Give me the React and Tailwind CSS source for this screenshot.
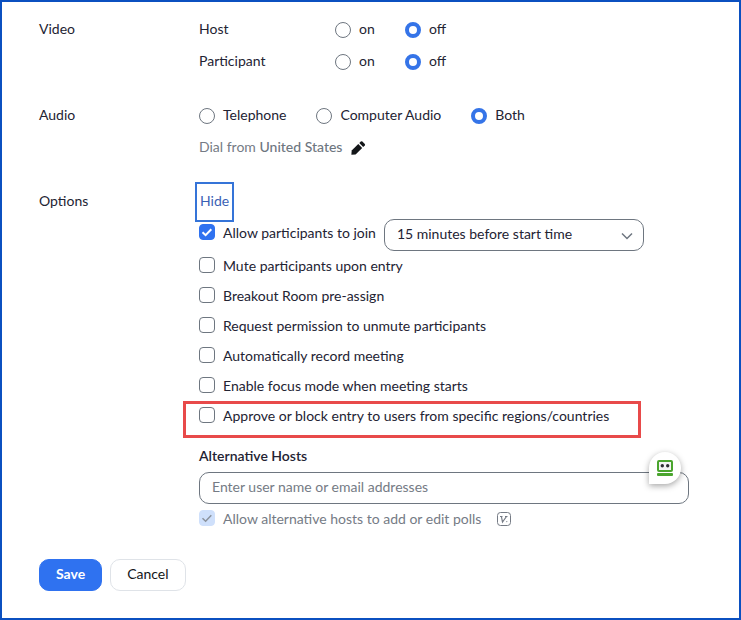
import { useState } from 'react';
import clsx from 'clsx';

const meetingOptions = [
  { id: 'mute', label: 'Mute participants upon entry' },
  { id: 'breakout', label: 'Breakout Room pre-assign' },
  { id: 'unmute', label: 'Request permission to unmute participants' },
  { id: 'record', label: 'Automatically record meeting' },
  { id: 'focus', label: 'Enable focus mode when meeting starts' },
  { id: 'regions', label: 'Approve or block entry to users from specific regions/countries', highlight: true },
];

const Radio = ({ name, value, label, selected, onSelect, className }) => (
  <label className={clsx('flex h-8 items-center gap-2', className)}>
    <input
      type="radio"
      name={name}
      value={value}
      checked={selected === value}
      onChange={() => onSelect(value)}
      className="size-4 shrink-0 appearance-none rounded-full border border-[#6e7680] bg-white checked:border-4 checked:border-[#3574e8]"
    />
    <span className="pb-0.5">{label}</span>
  </label>
);

const Checkbox = ({ label, className, ...props }) => (
  <label className={clsx('flex items-center gap-2', className)}>
    <span className="relative -mt-0.5 size-4 shrink-0">
      <input
        type="checkbox"
        className="peer block size-4 appearance-none rounded border border-[#6e7680] bg-white checked:border-[#2f72f0] checked:bg-[#2f72f0] disabled:border-[#cfe0fb] disabled:bg-[#cfe0fb]"
        {...props}
      />
      <svg
        viewBox="0 0 16 16"
        fill="none"
        stroke="currentColor"
        strokeWidth="2"
        className="pointer-events-none absolute inset-0 hidden text-white peer-checked:block peer-disabled:stroke-[1.5] peer-disabled:text-[#8b929c]"
      >
        <path d="M3.5 8.3 6.6 11.2 12.3 5.2" />
      </svg>
    </span>
    <span>{label}</span>
  </label>
);

const Section = ({ title, children }) => (
  <section className="flex">
    <h2 className="w-40 shrink-0 leading-[30px]">{title}</h2>
    <div className="min-w-0 flex-1">{children}</div>
  </section>
);

const VideoRow = ({ title, name, selected, onSelect }) => (
  <div className="flex" role="radiogroup" aria-label={title}>
    <span className="w-34 leading-[30px]">{title}</span>
    <Radio name={name} value="on" label="on" selected={selected} onSelect={onSelect} className="w-[70px]" />
    <Radio name={name} value="off" label="off" selected={selected} onSelect={onSelect} />
  </div>
);

// Browser extension badge that sits on the edge of the hosts field
const AssistantBadge = () => (
  <button
    type="button"
    aria-label="Fill form"
    className="absolute -top-5 right-2 flex size-8 items-center justify-center rounded-full rounded-bl-none bg-white shadow-[0_2px_6px_rgba(0,0,0,0.35)]"
  >
    <svg viewBox="0 0 16 16" className="size-4">
      <rect x="1" y="1" width="14" height="10" rx="1" fill="#f4f4f4" stroke="#4aa52e" strokeWidth="2" />
      <circle cx="5.3" cy="5.8" r="1.7" fill="#2d2d33" />
      <circle cx="10.7" cy="5.8" r="1.7" fill="#2d2d33" />
      <rect x="0" y="13" width="16" height="3" rx="1" fill="#4aa52e" />
    </svg>
  </button>
);

const App = () => {
  const [hostVideo, setHostVideo] = useState('off');
  const [participantVideo, setParticipantVideo] = useState('off');
  const [audio, setAudio] = useState('both');
  const [showOptions, setShowOptions] = useState(true);

  return (
    <main className="min-h-screen border-2 border-[#0b50c0] bg-white pt-3 pr-[50px] pb-[27px] pl-[37px] font-['Lato',sans-serif] text-sm text-[#232333]">
      <form onSubmit={(e) => e.preventDefault()}>
        <div className="flex flex-col gap-[22px]">
          <Section title="Video">
            <VideoRow title="Host" name="host-video" selected={hostVideo} onSelect={setHostVideo} />
            <VideoRow
              title="Participant"
              name="participant-video"
              selected={participantVideo}
              onSelect={setParticipantVideo}
            />
          </Section>

          <Section title="Audio">
            <div className="flex gap-[30px]" role="radiogroup" aria-label="Audio">
              <Radio name="audio" value="telephone" label="Telephone" selected={audio} onSelect={setAudio} />
              <Radio name="audio" value="computer" label="Computer Audio" selected={audio} onSelect={setAudio} />
              <Radio name="audio" value="both" label="Both" selected={audio} onSelect={setAudio} />
            </div>
            <div className="flex h-8 items-center gap-2 text-[#757b85]">
              <span className="pb-0.5">
                Dial from <span className="font-medium text-[#6e7680]">United States</span>
              </span>
              <button type="button" aria-label="Edit dial-in country" className="text-[#131619]">
                <svg viewBox="0 0 16 16" fill="currentColor" className="size-4">
                  <path d="M1.4 14.8 1.7 10.6 8.3 4 12.2 7.9 5.6 14.5Z" />
                  <path d="M9.3 3 10.8 1.5Q11.6.9 12.4 1.5L14.8 3.9Q15.4 4.6 14.8 5.4L13.2 6.9Z" />
                </svg>
              </button>
            </div>
          </Section>

          <Section title="Options">
            <button
              type="button"
              onClick={() => setShowOptions(!showOptions)}
              className="block h-8 px-px pb-0.5 text-[#3a5fb5] outline-2 outline-offset-2 outline-[#3574d8]"
            >
              {showOptions ? 'Hide' : 'Show'}
            </button>

            {showOptions && (
              <div className="mt-px">
                <div className="flex items-start gap-2">
                  <Checkbox id="join" label="Allow participants to join" defaultChecked className="h-7" />
                  <div className="relative w-[260px]">
                    <select
                      aria-label="Join time"
                      className="block h-8 w-full appearance-none rounded-[10px] border border-[#6e7680] bg-white px-3 pb-0.5"
                    >
                      <option>15 minutes before start time</option>
                      <option>10 minutes before start time</option>
                      <option>5 minutes before start time</option>
                      <option>Anytime</option>
                    </select>
                    <svg
                      viewBox="0 0 12 12"
                      fill="none"
                      stroke="#6e7680"
                      strokeWidth="1.5"
                      className="pointer-events-none absolute top-[11px] right-[11px] size-3"
                    >
                      <path d="M1 3.5 6 8.5 11 3.5" />
                    </svg>
                  </div>
                </div>

                {meetingOptions.map((option) => (
                  <div key={option.id} className="relative">
                    <Checkbox id={option.id} label={option.label} className="h-[30px]" />
                    {option.highlight && (
                      <div className="pointer-events-none absolute top-0 -left-4 h-[37px] w-[458px] border-3 border-[#e84a4a]" />
                    )}
                  </div>
                ))}

                <label htmlFor="alt-hosts" className="mt-[9px] block leading-8 font-semibold">
                  Alternative Hosts
                </label>
                <div className="relative">
                  <input
                    id="alt-hosts"
                    type="text"
                    placeholder="Enter user name or email addresses"
                    className="block h-8 w-full rounded-[10px] border border-[#6e7680] px-3 pb-1 placeholder:text-[#757b85]"
                  />
                  <AssistantBadge />
                </div>
                <div className="flex items-center gap-4 text-[#757b85]">
                  <Checkbox
                    id="polls"
                    label="Allow alternative hosts to add or edit polls"
                    defaultChecked
                    disabled
                    className="h-[30px]"
                  />
                  <svg viewBox="0 0 14 14" fill="none" stroke="currentColor" className="size-3.5">
                    <rect x="0.5" y="0.5" width="13" height="13" rx="3" />
                    <path d="M3 4.5H5.5M8 4.5H10.5M4.4 4.5 5.5 10 9.5 4.5" strokeWidth="1.2" />
                    <circle cx="9.8" cy="9.6" r="0.6" fill="currentColor" stroke="none" />
                  </svg>
                </div>
              </div>
            )}
          </Section>
        </div>

        <div className="mt-[25px] flex gap-2">
          <button type="submit" className="h-8 rounded-[10px] border border-[#2f72f0] bg-[#2f72f0] px-4 pb-0.5 font-bold text-white">
            Save
          </button>
          <button type="button" className="h-8 rounded-[10px] border border-[#dfe3e8] px-4 pb-0.5 text-[#131619]">
            Cancel
          </button>
        </div>
      </form>
    </main>
  );
};

export default App;
